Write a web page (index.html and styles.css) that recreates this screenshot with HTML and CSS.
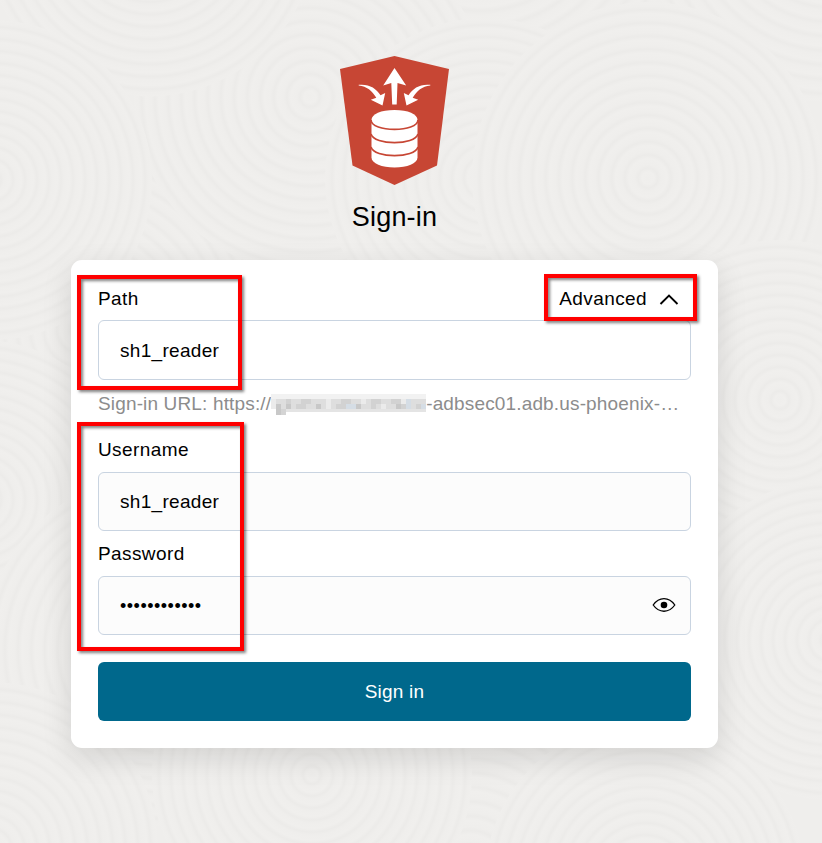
FILE: index.html
```html
<!DOCTYPE html>
<html lang="en">
<head>
<meta charset="utf-8">
<title>Sign-in</title>
<link rel="stylesheet" href="styles.css">
</head>
<body>
<svg class="backdrop" viewBox="0 0 822 843" aria-hidden="true">
  <defs>
    <radialGradient id="ripple" gradientUnits="userSpaceOnUse" cx="0" cy="0" r="12" spreadMethod="repeat">
      <stop offset="0" stop-color="#efeeec"/><stop offset=".45" stop-color="#f0efed"/><stop offset=".75" stop-color="#ecebe9"/><stop offset="1" stop-color="#efeeec"/>
    </radialGradient>
    <circle id="disc" r="160" fill="url(#ripple)"/>
  </defs>
  <use href="#disc" transform="translate(480 -110) scale(1.3)"/>
  <use href="#disc" transform="translate(830 -90) scale(1.2)"/>
  <use href="#disc" transform="translate(400 350) scale(1.4)"/>
  <use href="#disc" transform="translate(80 330) scale(1.1)"/>
  <use href="#disc" transform="translate(310 97) scale(1.1)"/>
  <use href="#disc" transform="translate(150 -70) scale(1.04)"/>
  <use href="#disc" transform="translate(485 178)"/>
  <use href="#disc" transform="translate(-8 180)"/>
  <use href="#disc" transform="translate(648 178) scale(1.1)"/>
  <use href="#disc" transform="translate(780 400)"/>
  <use href="#disc" transform="translate(-20 500)"/>
  <use href="#disc" transform="translate(160 650) scale(1.1)"/>
  <use href="#disc" transform="translate(620 690) scale(1.1)"/>
  <use href="#disc" transform="translate(830 640)"/>
  <use href="#disc" transform="translate(470 870) scale(1.2)"/>
  <use href="#disc" transform="translate(312 775)"/>
  <use href="#disc" transform="translate(-10 850) scale(1.05)"/>
  <use href="#disc" transform="translate(645 880)"/>
</svg>
<main class="page">
  <header class="brand">
    <svg class="logo" viewBox="0 0 110 130" aria-hidden="true">
      <path fill="#c74634" d="M54.5 1 109 14 97 110.500 54.500 130 12.500 110.500 0 14Z"/>
      <g fill="#fff">
        <path d="M54.500 13 66.200 30.500 57.500 28 56.700 49.500H52.200L51.300 28 43.200 30.500Z"/>
        <path d="M18.700 29.800C29 28.800 36 33 40.500 40.300L45.200 38 42.500 50.500 30.800 44.700 36.300 42.800C32 36 27 31.300 18.700 30.600Z"/>
        <path d="M90.300 29.800C80 28.800 73 33 68.500 40.300L63.800 38 66.500 50.500 78.200 44.700 72.700 42.800C77 36 82 31.300 90.300 30.600Z"/>
        <path d="M31.500 65C31.500 59 41 55 54.500 55S77.500 59 77.500 65V102.500C77.500 108.500 67 112.500 54.500 112.500S31.500 108.500 31.500 102.500Z"/>
      </g>
      <path fill="none" stroke="#c74634" stroke-width="1.700" d="M31 65C31 77.500 78 77.500 78 65M31 79C34 90.500 75 90.500 78 79M31 92C34 103.500 75 103.500 78 92"/>
    </svg>
    <h1 class="title">Sign-in</h1>
  </header>
  <form class="card">
    <div class="row">
      <label class="path-label" for="path">Path</label>
      <div class="advanced">Advanced
        <svg width="20" height="12" viewBox="0 0 20 12" aria-hidden="true"><path d="M1.500 11 10 2.500 18.500 11" fill="none" stroke="#000" stroke-width="1.900"/></svg>
      </div>
    </div>
    <input class="field path-field" id="path" type="text" value="sh1_reader">
    <div class="url"><span>Sign-in URL: https://</span><svg class="mosaic" width="155" height="21" viewBox="0 0 31 4.2" preserveAspectRatio="none" shape-rendering="crispEdges" aria-hidden="true">
      <path fill="#f2f2f2" d="M0 0H31V1H0Z"/>
      <path fill="#dedede" d="M0 1H31V3H0Z"/>
      <path fill="#e4e4e4" d="M1 3H31V3.600H1Z"/>
      <path fill="#ebebeb" d="M0 1h1v1H0ZM11 1h1v2h-1ZM26 1h1v1h-1ZM18 1h1v1h-1ZM22 2h1v1h-1ZM0 2h1v1H0Z"/>
      <path fill="#d2d2d2" d="M3 1h1v1H3ZM6 1h2v1H6ZM14 1h2v1h-2ZM20 1h2v1h-2ZM24 1h2v1h-2ZM5 2h2v1H5ZM13 2h2v1h-2ZM20 2h1v1h-1ZM26 2h1v1h-1ZM29 2h1v1h-1Z"/>
      <path fill="#c8c8c8" d="M1 2h1v1H1ZM3 2h1v1H3ZM9 2h1v1H9ZM17 2h1v1h-1ZM25 2h1v1h-1ZM1 3h1v1.200H1Z"/>
      <path fill="#d5dde5" d="M15 2h2v1h-2ZM27 1h1v2h-1ZM30 2h1v1h-1Z"/>
      <path fill="#d4d4d4" d="M2 3h1v1.200H2Z"/>
    </svg><span class="host">-adbsec01.adb.us-phoenix-…</span></div>
    <label class="user-label" for="user">Username</label>
    <input class="field filled" id="user" type="text" value="sh1_reader">
    <label class="pass-label">Password</label>
    <div class="field filled password">
      <span class="dots">••••••••••••</span>
      <svg class="eye" width="24" height="16" viewBox="0 0 24 16" aria-hidden="true"><path d="M1.200 8C7-.5 17-.5 22.800 8C17 16.300 7 16.300 1.200 8Z" fill="none" stroke="#000" stroke-width="1.300"/><circle cx="12" cy="8" r="3.300"/></svg>
    </div>
    <button class="submit" type="button">Sign in</button>
  </form>
</main>
<div class="mark mark-path"></div>
<div class="mark mark-advanced"></div>
<div class="mark mark-login"></div>
</body>
</html>
```

FILE: styles.css
```css
* { box-sizing: border-box; }
body {
  margin: 0;
  height: 843px;
  overflow: hidden;
  position: relative;
  background: #efeeec;
  color: #000;
  font: 19px/22px "Liberation Sans", Arial, sans-serif;
  letter-spacing: 0.4px;
}
.backdrop { position: absolute; inset: 0; width: 822px; height: 843px; }
.page {
  position: relative;
  width: 647px;
  margin-left: 71px;
  padding-top: 55px;
}
.brand {
  display: flex;
  flex-direction: column;
  align-items: center;
  height: 205px;
}
.logo { width: 110px; height: 130px; }
.title {
  margin: 16px 0 0;
  font-size: 27px;
  line-height: 32px;
  font-weight: 400;
  letter-spacing: 0.2px;
}
.card {
  display: flex;
  flex-direction: column;
  height: 488px;
  padding: 27px;
  border-radius: 11px;
  background: #fff;
  box-shadow: 0 10px 30px rgba(0, 0, 0, 0.12);
}
.row { display: flex; justify-content: space-between; height: 33px; }
.path-label { padding-top: 1px; }
.advanced { display: flex; align-items: center; gap: 12px; height: 24px; margin-right: 12px; }
.field {
  width: 100%;
  height: 59px;
  padding: 0 21px;
  border: 1px solid #c9d4e1;
  border-radius: 6px;
  background: #fff;
  color: #000;
  font: inherit;
  letter-spacing: 0.3px;
}
.path-field { height: 60px; padding-top: 2px; }
.filled { background: #fcfcfc; }
.url {
  display: flex;
  align-items: flex-start;
  height: 22px;
  margin-top: 13px;
  color: #8c8c8c;
  letter-spacing: 0.15px;
  white-space: nowrap;
}
.mosaic { margin-top: 1px; }
.user-label { margin: 24px 0 11px; }
.pass-label { margin: 12px 0 11px; }
.password { display: flex; align-items: center; justify-content: space-between; padding-right: 14px; }
.dots { font-size: 18px; letter-spacing: 0.5px; }
.eye { margin-bottom: 1px; }
.submit {
  height: 59px;
  margin-top: 27px;
  border: 0;
  border-radius: 6px;
  background: #00688c;
  color: #fff;
  font: inherit;
  letter-spacing: 0.2px;
}
.mark { position: absolute; border: 4px solid #f00; filter: drop-shadow(2px 2px 1.5px rgba(0, 0, 0, 0.5)); }
.mark-path { left: 77px; top: 275px; width: 165px; height: 115px; }
.mark-advanced { left: 544px; top: 274px; width: 153px; height: 47px; }
.mark-login { left: 77px; top: 422px; width: 167px; height: 229px; }
```
